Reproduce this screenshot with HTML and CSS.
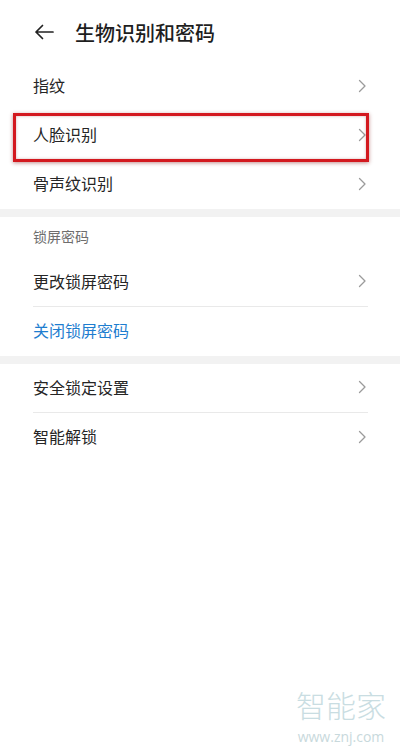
FILE: index.html
```html
<!DOCTYPE html>
<html lang="zh">
<head>
<meta charset="utf-8">
<link rel="stylesheet" href="styles.css">
</head>
<body>
<div class="page">
  <header class="header">
    <svg class="back" width="20" height="16" viewBox="0 0 20 16"><path d="M19 8H2M8.5 1.5L2 8l6.5 6.5" fill="none" stroke="#222" stroke-width="1.7" stroke-linecap="round" stroke-linejoin="round"/></svg>
    <h1 class="title">生物识别和密码</h1>
  </header>

  <section class="group">
    <div class="row"><span class="label">指纹</span><svg class="chev" width="9" height="14" viewBox="0 0 9 14"><path d="M1.5 1.5L7 7l-5.5 5.5" fill="none" stroke="#9b9b9b" stroke-width="1.3" stroke-linecap="round" stroke-linejoin="round"/></svg></div>
    <div class="row"><span class="label">人脸识别</span><svg class="chev" width="9" height="14" viewBox="0 0 9 14"><path d="M1.5 1.5L7 7l-5.5 5.5" fill="none" stroke="#9b9b9b" stroke-width="1.3" stroke-linecap="round" stroke-linejoin="round"/></svg><div class="redbox"></div></div>
    <div class="row"><span class="label">骨声纹识别</span><svg class="chev" width="9" height="14" viewBox="0 0 9 14"><path d="M1.5 1.5L7 7l-5.5 5.5" fill="none" stroke="#9b9b9b" stroke-width="1.3" stroke-linecap="round" stroke-linejoin="round"/></svg></div>
  </section>

  <div class="band"></div>

  <section class="group">
    <div class="sub">锁屏密码</div>
    <div class="row line"><span class="label">更改锁屏密码</span><svg class="chev" width="9" height="14" viewBox="0 0 9 14"><path d="M1.5 1.5L7 7l-5.5 5.5" fill="none" stroke="#9b9b9b" stroke-width="1.3" stroke-linecap="round" stroke-linejoin="round"/></svg></div>
    <div class="row"><span class="label blue">关闭锁屏密码</span></div>
  </section>

  <div class="band"></div>

  <section class="group">
    <div class="row line"><span class="label">安全锁定设置</span><svg class="chev" width="9" height="14" viewBox="0 0 9 14"><path d="M1.5 1.5L7 7l-5.5 5.5" fill="none" stroke="#9b9b9b" stroke-width="1.3" stroke-linecap="round" stroke-linejoin="round"/></svg></div>
    <div class="row"><span class="label">智能解锁</span><svg class="chev" width="9" height="14" viewBox="0 0 9 14"><path d="M1.5 1.5L7 7l-5.5 5.5" fill="none" stroke="#9b9b9b" stroke-width="1.3" stroke-linecap="round" stroke-linejoin="round"/></svg></div>
  </section>

  <div class="watermark">
    <div class="wm-big">智能家</div>
    <div class="wm-url">www.znj.com</div>
  </div>
</div>
</body>
</html>
```

FILE: styles.css
```css
* { box-sizing: border-box; margin: 0; padding: 0; }
html, body { width: 400px; height: 754px; background: #fff; }
body {
  font-family: "Noto Sans CJK SC", "Noto Sans", sans-serif;
  color: #222;
  overflow: hidden;
}
.page { position: relative; width: 400px; height: 754px; }
.header {
  height: 62px;
  display: flex;
  align-items: center;
  padding: 2px 0 0 34px;
}
.back { margin-right: 21px; }
.title { font-size: 20px; font-weight: 500; color: #1e1e1e; }
.group { display: flex; flex-direction: column; }
.row {
  position: relative;
  height: 49px;
  display: flex;
  align-items: center;
  justify-content: space-between;
  margin: 0 32px 0 33px;
}
.row.line { border-bottom: 1px solid #e9e9e9; }
.label { font-size: 16px; color: #252525; margin-top: -3px; }
.label.blue { color: #1e7dcf; }
.chev { margin-right: 1px; margin-top: -2px; }
.redbox {
  position: absolute;
  left: -20px; right: -1px; top: 2px; bottom: -2px;
  border: 3px solid #d3191f;
  box-shadow: 0 1px 4px rgba(120,0,0,0.45), inset 0 0 3px rgba(120,0,0,0.3);
}
.band { height: 8px; background: #f2f2f2; }
.sub {
  height: 41px;
  margin-left: 33px;
  padding-top: 9px;
  font-size: 14px;
  color: #6e6e6e;
}
.watermark {
  position: absolute;
  left: 290px; top: 682px;
  width: 102px;
  color: #c9dde2;
  text-align: center;
}
.wm-big { font-size: 30px; font-weight: 300; line-height: 44px; }
.wm-url { font-family: "Open Sans", sans-serif; font-size: 14px; line-height: 19px; margin-top: 1px; color: #c8d9dc; }
```
